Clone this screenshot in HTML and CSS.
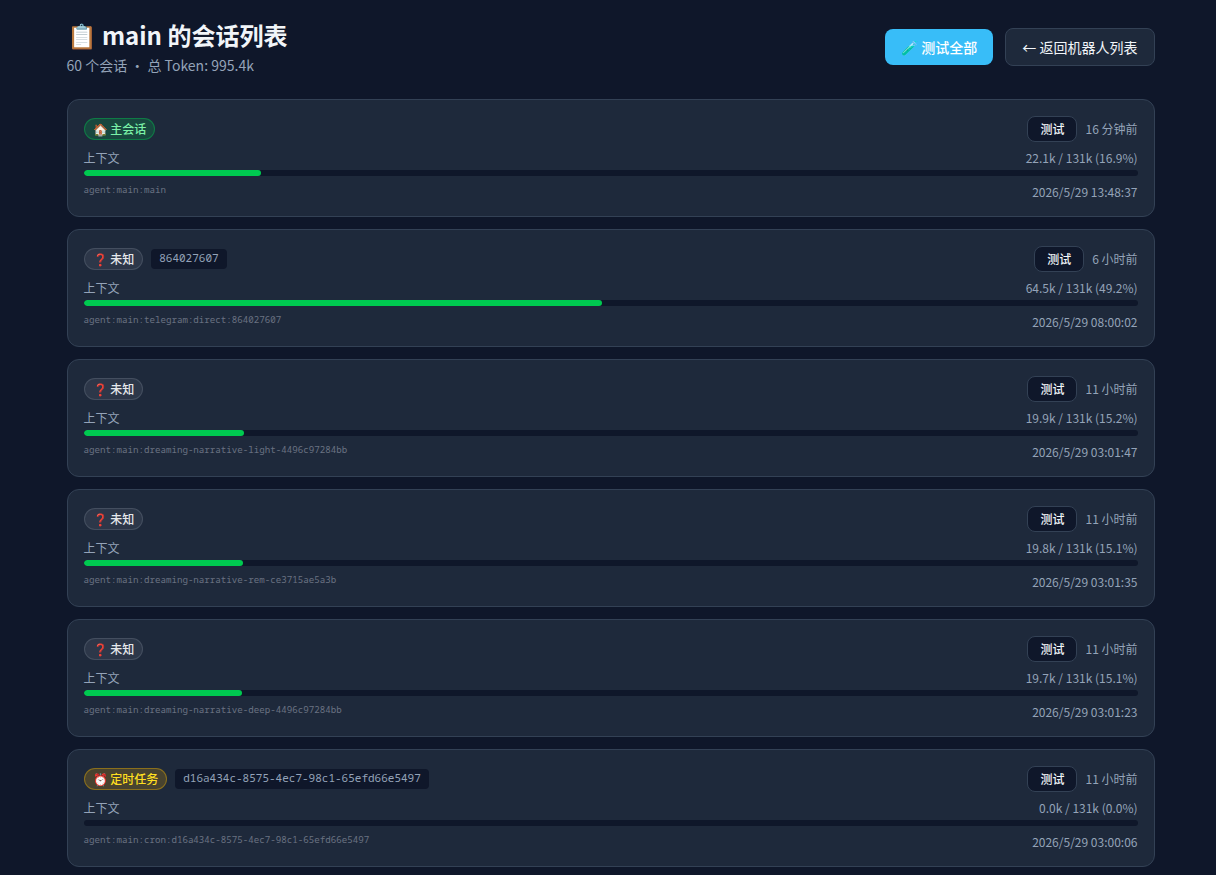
FILE: index.html
```html
<!doctype html>
<html lang="zh-CN">
<head>
    <meta charset="utf-8">
    <meta name="viewport" content="width=device-width, initial-scale=1">
    <title>main 的会话列表</title>
    <link rel="stylesheet" href="styles.css">
</head>
<body>
    <main class="page">
        <header class="header">
            <div>
                <h1>📋 main 的会话列表</h1>
                <p class="summary">60 个会话 · 总 Token: 995.4k</p>
            </div>
            <div class="actions">
                <button class="btn btn-primary" type="button">🧪 测试全部</button>
                <a class="btn btn-back" href="#">← 返回机器人列表</a>
            </div>
        </header>

        <div class="sessions">
            <article class="card">
                <div class="row">
                    <span class="badge badge-main">🏠 主会话</span>
                    <button class="test" type="button">测试</button>
                    <span class="ago">16 分钟前</span>
                </div>
                <div class="context"><span>上下文</span><span>22.1k / 131k (16.9%)</span></div>
                <div class="bar"><div class="fill" style="width: 16.8%"></div></div>
                <div class="foot"><code class="key"><small>agent:main:main</small></code><time>2026/5/29 13:48:37</time></div>
            </article>

            <article class="card">
                <div class="row">
                    <span class="badge">❓ 未知</span>
                    <code class="id">864027607</code>
                    <button class="test" type="button">测试</button>
                    <span class="ago">6 小时前</span>
                </div>
                <div class="context"><span>上下文</span><span>64.5k / 131k (49.2%)</span></div>
                <div class="bar"><div class="fill" style="width: 49.2%"></div></div>
                <div class="foot"><code class="key"><small>agent:main:telegram:direct:864027607</small></code><time>2026/5/29 08:00:02</time></div>
            </article>

            <article class="card">
                <div class="row">
                    <span class="badge">❓ 未知</span>
                    <button class="test" type="button">测试</button>
                    <span class="ago">11 小时前</span>
                </div>
                <div class="context"><span>上下文</span><span>19.9k / 131k (15.2%)</span></div>
                <div class="bar"><div class="fill" style="width: 15.2%"></div></div>
                <div class="foot"><code class="key"><small>agent:main:dreaming-narrative-light-4496c97284bb</small></code><time>2026/5/29 03:01:47</time></div>
            </article>

            <article class="card">
                <div class="row">
                    <span class="badge">❓ 未知</span>
                    <button class="test" type="button">测试</button>
                    <span class="ago">11 小时前</span>
                </div>
                <div class="context"><span>上下文</span><span>19.8k / 131k (15.1%)</span></div>
                <div class="bar"><div class="fill" style="width: 15.1%"></div></div>
                <div class="foot"><code class="key"><small>agent:main:dreaming-narrative-rem-ce3715ae5a3b</small></code><time>2026/5/29 03:01:35</time></div>
            </article>

            <article class="card">
                <div class="row">
                    <span class="badge">❓ 未知</span>
                    <button class="test" type="button">测试</button>
                    <span class="ago">11 小时前</span>
                </div>
                <div class="context"><span>上下文</span><span>19.7k / 131k (15.1%)</span></div>
                <div class="bar"><div class="fill" style="width: 15%"></div></div>
                <div class="foot"><code class="key"><small>agent:main:dreaming-narrative-deep-4496c97284bb</small></code><time>2026/5/29 03:01:23</time></div>
            </article>

            <article class="card">
                <div class="row">
                    <span class="badge badge-cron">⏰ 定时任务</span>
                    <code class="id">d16a434c-8575-4ec7-98c1-65efd66e5497</code>
                    <button class="test" type="button">测试</button>
                    <span class="ago">11 小时前</span>
                </div>
                <div class="context"><span>上下文</span><span>0.0k / 131k (0.0%)</span></div>
                <div class="bar"><div class="fill" style="width: 0%"></div></div>
                <div class="foot"><code class="key"><small>agent:main:cron:d16a434c-8575-4ec7-98c1-65efd66e5497</small></code><time>2026/5/29 03:00:06</time></div>
            </article>
        </div>
    </main>
</body>
</html>
```
FILE: styles.css
```css
* {
    box-sizing: border-box;
}
body {
    margin: 0;
    padding-left: 5px;
    background: #0f172a;
    color: #f1f5f9;
    font-family: "Noto Sans CJK SC", sans-serif;
    font-size: 12px;
    line-height: 16px;
}
.page {
    max-width: 1088px;
    margin: 0 auto;
    padding: 19px 0 8px;
}
.header {
    display: flex;
    justify-content: space-between;
    align-items: center;
    margin-bottom: 24px;
}
h1 {
    margin: 0 0 4px;
    font-size: 24px;
    line-height: 32px;
    font-weight: 700;
}
.summary {
    margin: 0;
    color: #94a3b8;
    font-size: 14px;
    line-height: 20px;
}
.actions {
    display: flex;
    align-items: center;
    gap: 12px;
}
.btn {
    padding: 8px 16px;
    border-radius: 8px;
    font-family: inherit;
    font-size: 14px;
    line-height: 20px;
    font-weight: 500;
    text-decoration: none;
}
.btn-primary {
    border: 0;
    background: #38bdf8;
    color: #fff;
}
.btn-back {
    border: 1px solid #334155;
    background: #1e293b;
    color: #f1f5f9;
    font-weight: 400;
}
.sessions {
    display: grid;
    gap: 12px;
}
.card {
    padding: 16px;
    border: 1px solid #334155;
    border-radius: 12px;
    background: #1e293b;
    color: #94a3b8;
}
.row {
    display: flex;
    align-items: center;
    gap: 8px;
    margin-bottom: 8px;
}
.badge {
    padding: 2px 8px;
    border: 1px solid #6a728266;
    border-radius: 11px;
    background: #6a728233;
    color: #e5e7eb;
    font-weight: 500;
}
.badge-main {
    border-color: #00c95066;
    background: #00c95033;
    color: #7bf1a8;
}
.badge-cron {
    border-color: #f0b10066;
    background: #f0b10033;
    color: #ffdf20;
}
code {
    font-family: "Noto Sans Mono", monospace;
    font-size: 11px;
}
.id {
    padding: 1px 8px 3px;
    border-radius: 4px;
    background: #0f172a;
}
.test {
    margin-left: auto;
    padding: 4px 12px;
    border: 1px solid #334155;
    border-radius: 8px;
    background: #0f172a;
    color: #f1f5f9;
    font-family: inherit;
    font-size: 12px;
    line-height: 16px;
    font-weight: 500;
}
.context {
    display: flex;
    justify-content: space-between;
    margin-bottom: 4px;
}
.bar {
    height: 6px;
    margin-bottom: 8px;
    border-radius: 3px;
    overflow: hidden;
    background: #0f172a;
}
.fill {
    height: 100%;
    border-radius: 3px;
    background: #00c950;
}
.foot {
    display: flex;
    justify-content: space-between;
    align-items: flex-start;
}
.key {
    color: #6a7282;
    line-height: 10px;
}
```
